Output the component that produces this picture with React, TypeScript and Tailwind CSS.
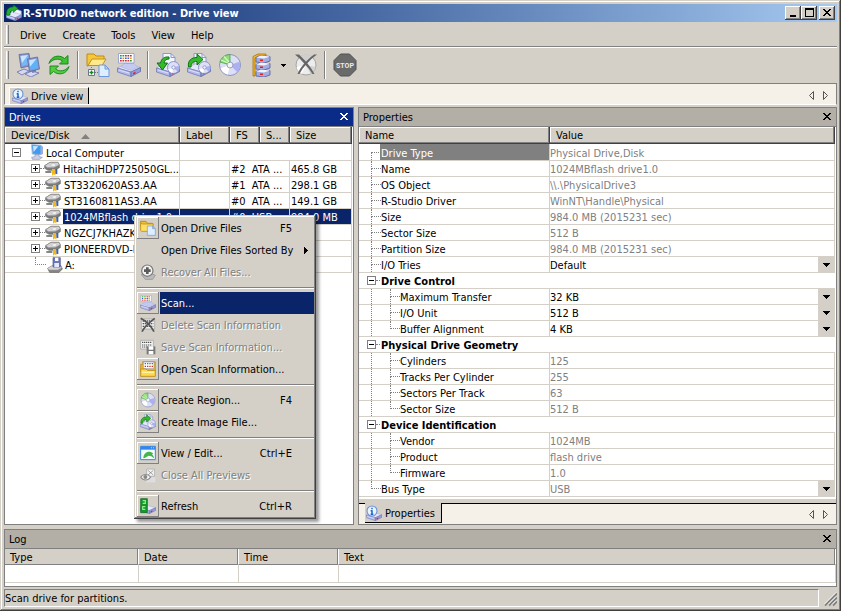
import { useState } from "react";
import type { ReactNode } from "react";
import clsx from "clsx";

/* ---------- icon parts, all drawn on a 24 x 24 grid ---------- */

const Svg = ({ size = 24, gray, children }: { size?: number; gray?: boolean; children: ReactNode }) => (
  <svg
    width={size}
    height={size}
    viewBox="0 0 24 24"
    aria-hidden="true"
    className={clsx("shrink-0", gray && "grayscale")}
  >
    {children}
  </svg>
);

const Box = () => (
  <g>
    <path d="M.5 15 9 10.500l14.500 4L14 19z" fill="#e6e8f8" stroke="#a3aad8" strokeWidth=".7" />
    <path d="M.5 15 14 19v4.500L.5 19z" fill="#b4bbec" stroke="#7079b4" strokeWidth=".8" />
    <path d="M14 19l9.500-4.500V18.500L14 23.500z" fill="#949cdc" stroke="#6069a6" strokeWidth=".8" />
    <path d="M2 17l10 3" stroke="#dfe3fb" strokeWidth=".9" />
    <path d="M16 20l2.500-1.200v1.600L16 21.600z" fill="#e02020" />
  </g>
);

const Disc = ({ cx, cy, r }: { cx: number; cy: number; r: number }) => (
  <g>
    <circle cx={cx} cy={cy} r={r} fill="#dcdff6" stroke="#858cc0" strokeWidth=".9" />
    <path d={`M${cx} ${cy}L${cx + r * 0.9} ${cy - r * 0.3}A${r} ${r} 0 0 1 ${cx + r * 0.7} ${cy + r * 0.7}z`} fill="#aab1ee" />
    <path d={`M${cx} ${cy}L${cx - r * 0.9} ${cy + r * 0.3}A${r} ${r} 0 0 0 ${cx - r * 0.2} ${cy + r * 0.9}z`} fill="#ffffff" />
    <circle cx={cx} cy={cy} r={r * 0.28} fill="#f4f4f4" stroke="#858cc0" strokeWidth=".8" />
  </g>
);

const Folder = () => (
  <g>
    <path d="M1 1h7l2 2h8v4H6L2 13H1z" fill="#f3c83c" stroke="#c08a12" strokeWidth="1" />
    <path d="M6 6h14l-4 6.500H2z" fill="#ffe98a" stroke="#c4921a" strokeWidth="1" />
  </g>
);

const Doc = ({ x, y, w, h }: { x: number; y: number; w: number; h: number }) => (
  <path
    d={`M${x} ${y}h${w - 4}l4 4v${h - 4}h${-w}z M${x + w - 4} ${y}v4h4`}
    fill="#dceeff"
    stroke="#6f97dc"
    strokeWidth="1"
  />
);

const Grid = () => (
  <g>
    <path d="M1.500 .5h15.500v9.500H1.500z" fill="#fff" stroke="#8d97c8" strokeWidth=".8" />
    {[3, 5.500, 8, 10.500, 13].map((x, i) => (
      <g key={x}>
        <rect x={x} y="2" width="1.700" height="1.500" fill={i < 2 ? "#1d9b3a" : "#b0342a"} />
        <rect x={x} y="4.500" width="1.700" height="1.500" fill={i % 3 === 1 ? "#e39a1f" : "#3b6ad0"} />
        <rect x={x} y="7" width="1.700" height="1.500" fill={i > 3 ? "#1d9b3a" : "#d12a2a"} />
      </g>
    ))}
  </g>
);

const Monitors = () => (
  <>
    <path d="M1 19l7-3 5 2-7 4z" fill="#d4d8f2" stroke="#737bb0" strokeWidth=".9" />
    <path d="M3 1.500 13 .5l2 12L5 15z" fill="#8c96cc" stroke="#5d689f" strokeWidth=".8" />
    <path d="M4.500 3l7.500-.9 1.600 9L6 13z" fill="#74b8f6" />
    <path d="M4.500 3l7.500-.9L6 10z" fill="#cbe6ff" />
    <path d="M9 21l7-3 7 2-8 4z" fill="#d4d8f2" stroke="#737bb0" strokeWidth=".9" />
    <path d="M16 16l4-1v4l-4 1z" fill="#7a84bf" />
    <path d="M11.500 6l10-2 2 12-10 2.500z" fill="#8c96cc" stroke="#5d689f" strokeWidth=".8" />
    <path d="M13 7.200l7.500-1.500 1.600 9.200-7.600 1.900z" fill="#5eb2f8" />
    <path d="M13 7.200l7.500-1.500-6.500 8z" fill="#c4e4ff" />
  </>
);

const Cycle = () => (
  <>
    <path d="M2 10.500C4 3 12 1 17.500 5.500L21 2.500V11h-8.500l3-3C11.500 5 6 5.500 2 10.500z" fill="#3ec22f" stroke="#128418" strokeWidth=".9" />
    <path d="M22 13.500c-2 7.500-10 9.500-15.500 5L3 21.500V13h8.500l-3 3c4 3 9.500 2.500 13.500-2.500z" fill="#56cd40" stroke="#128418" strokeWidth=".9" />
  </>
);

const OpenFiles = () => (
  <>
    <Folder />
    <path d="M5.500 14v2M9 19.500h3" stroke="#777" strokeDasharray="1 1" />
    <path d="M2.500 16.500h6v6h-6z" fill="#fff" stroke="#6c7486" />
    <path d="M5.500 17.500v4M3.500 19.500h4" stroke="#138a22" strokeWidth="1.400" />
    <Doc x={13} y={12} w={10} h={11.500} />
  </>
);

const FolderDoc = () => (
  <>
    <path d="M1 2h8l2 3h8v4H1z" fill="#f0bf30" stroke="#b98510" strokeWidth="1.300" />
    <path d="M1 16V5l3 1h16l-2 11H2z" fill="#ffdf63" stroke="#c4921a" strokeWidth="1.300" />
    <Doc x={11} y={9} w={12} h={14} />
  </>
);

const Scan = () => (
  <>
    <Box />
    <path d="M4 14l3-3.500h10l4 4-7 3z" fill="#c3c9ef" stroke="#a3aad8" strokeWidth=".5" />
    <Grid />
  </>
);

const ImageOf = ({ flip }: { flip?: boolean }) => (
  <>
    <path d="M7 .5h8l4 4V15H7z" fill="#f3f5ff" stroke="#8d97c8" />
    <path d="M15 .5v4h4" fill="none" stroke="#8d97c8" />
    <Box />
    <Disc cx={17.500} cy={14.500} r={6} />
    {flip ? (
      <path d="M1.500 14C.5 8 4 4.500 10 4.500V1l6 5.500-6 5.500V8.500C6 8.500 4 10 4 14z" fill="#35bb2a" stroke="#0c7414" strokeWidth="1" />
    ) : (
      <path d="M13 4C8.500 3.500 5.500 5.500 4.500 10H1l5.500 7 5-7H8c.5-2.500 2-4 5-4z" fill="#35bb2a" stroke="#0c7414" strokeWidth="1" />
    )}
  </>
);

const Region = () => (
  <>
    <Disc cx={12} cy={12} r={10.500} />
    <path d="M12 9V1.500A10.500 10.500 0 0 0 2 9l7 2c.5-1.200 1.500-2 3-2z" fill="#8fdc78" stroke="#48a53c" strokeWidth=".8" />
    <path d="M11 9 6 3.500M10 10 3 7" stroke="#d6f7c8" strokeWidth="1.200" />
  </>
);

const Cabinet = () => (
  <>
    <path d="M4 3.500 9 1h8v2H9L6 5v18H4z" fill="#f6bd2c" stroke="#a86e08" strokeWidth=".8" />
    {[2.500, 9.500, 16.500].map((y) => (
      <g key={y}>
        <path d={`M7 ${y + 2}l5-2 9 1v4.500l-6 2-8-1z`} fill="#a4addf" stroke="#5d67a4" strokeWidth=".9" />
        <path d={`M7 ${y + 2}l5-2 9 1-6 2z`} fill="#f0f2ff" />
        <path d={`M11 ${y + 4}h3v1.500h-3z`} fill="#dd2020" />
      </g>
    ))}
  </>
);

const DiscCross = () => (
  <>
    <circle cx="12" cy="12" r="10" fill="#ececec" stroke="#a4a4a4" />
    <path d="M12 12 6 3.500a10 10 0 0 1 12 0z" fill="#cfcfcf" />
    <path d="M12 12l9.500 2a10 10 0 0 1-5 7z" fill="#d2d2d2" />
    <path d="M12 12l-9.500 2a10 10 0 0 0 5 7z" fill="#fff" />
    <path d="M1 1.500h4C11 7 17 14 20.500 21h-2C14 14 8 7.500 1 1.500z" fill="#666" />
    <path d="M23 1.500h-3C13 7 7 13 3.500 21h2C9 14 15 7.500 23 1.500z" fill="#666" />
  </>
);

const Stop = () => (
  <>
    <path d="M7.500 1h9L23 7.500v9L16.500 23h-9L1 16.500v-9z" fill="#6a6a6a" stroke="#505050" />
    <text x="12" y="15" textAnchor="middle" fontSize="7" fontWeight="bold" fontFamily="Roboto, sans-serif" fill="#ececec">
      STOP
    </text>
  </>
);

const InfoDrive = () => (
  <>
    <Box />
    <circle cx="9" cy="9" r="7.500" fill="#e9f4ff" stroke="#6d8fd4" strokeWidth="1.600" />
    <path d="M9 4v2.400M9 8v6M7 8.500h2M7 14h4" stroke="#1766c8" strokeWidth="2.200" />
  </>
);

const AppMark = () => (
  <>
    <path d="M8 8l7-2 8 3v7l-7 3-8-3z" fill="#f2f4fc" stroke="#8590c5" />
    <Box />
    <path d="M1 15C0 7 4 3 11 3V0l7 5-7 6V8C7 8 6 10 6 15z" fill="#26ae32" stroke="#07701c" />
  </>
);

const Computer = () => (
  <>
    <path d="M4 1l14 1v14L5 15z" fill="#3d9bf2" stroke="#9db5da" strokeWidth="1.500" />
    <path d="M6 3l8 .5L7 12z" fill="#c7e5ff" />
    <path d="M18 2l3 2v11l-3 1z" fill="#a0abd8" />
    <path d="M9 16h6v3l5 1-4 3H5l-1-3 5-1z" fill="#cdd2e8" stroke="#8a90b5" />
  </>
);

const HardDisk = () => (
  <>
    <path d="M1 7l8-5h12l2 4v4l-7 4H6L1 11z" fill="#7d7d7d" stroke="#555" strokeWidth=".8" />
    <path d="M1 7l8-5h12l2 4-8 4H5z" fill="#d4d4d4" stroke="#777" strokeWidth=".8" />
    <ellipse cx="14" cy="6" rx="4" ry="2" fill="#f7f7f7" stroke="#999" strokeWidth=".6" />
    <path d="M2 15h9v3H2z" fill="#858585" />
    <path d="M12 12h5v10l-2-2-3 2z" fill="#f0b91f" />
    <path d="M17 12h3v8l-3-1z" fill="#3c5fb8" />
  </>
);

const Floppy = () => (
  <>
    <path d="M1 17l7-4h13l2 5-5 5H4z" fill="#8a8a8a" stroke="#555" />
    <path d="M1 17l7-4h13l1 3-6 3H3z" fill="#d4d4d4" />
    <path d="M9 1h11v14H9z" fill="#6b78b8" stroke="#4b558e" />
    <path d="M12 1h5v5h-5z" fill="#fff" />
    <path d="M11 9h7v6h-7z" fill="#e4e8fa" />
  </>
);

const Recover = () => (
  <>
    <path d="M2 16l9-4 12 5-4 6H8z" fill="#bbb" stroke="#888" />
    <circle cx="11" cy="10" r="8.500" fill="#f1f1f1" stroke="#777" strokeWidth="1.800" />
    <path d="M11 5v10M6 10h10" stroke="#5b5b5b" strokeWidth="4" />
  </>
);

const GridCross = () => (
  <>
    <path d="M2 3h20v15H2z" fill="#f0f0f0" stroke="#999" />
    <path d="M4 6h16M4 10h16M4 14h16" stroke="#555" strokeWidth="2" strokeDasharray="2 1" />
    <path d="M1 2c8 4 15 11 20 20M22 2C14 8 7 14 3 22" fill="none" stroke="#555" strokeWidth="2.600" />
  </>
);

const GridSave = () => (
  <>
    <path d="M1 2h19v13H1z" fill="#f5f5f5" stroke="#999" />
    <path d="M3 5h15M3 9h15M3 12h8" stroke="#555" strokeWidth="1.800" strokeDasharray="2 1" />
    <path d="M10 11h13v12H10z" fill="#777" />
    <path d="M13 11h7v5h-7zM13 18h7v5h-7z" fill="#fff" />
  </>
);

const GridFolder = () => (
  <>
    <path d="M1 5h3V1h19v14H1z" fill="#ecb62d" stroke="#b98510" />
    <path d="M5 1.500h16v10H5z" fill="#fff" stroke="#8d97c8" />
    <path d="M7 4h13" stroke="#1d9b3a" strokeWidth="2" strokeDasharray="2 1.500" />
    <path d="M7 8h13" stroke="#d12a2a" strokeWidth="2" strokeDasharray="2 1.500" />
    <path d="M1 12h8l2 2h12v9H1z" fill="#ffd94a" stroke="#bb8a10" strokeWidth="1.300" />
    <path d="M3 17h18" stroke="#fff3a8" strokeWidth="2" />
  </>
);

const Preview = () => (
  <>
    <path d="M1 2h22v20H1z" fill="#f4fbff" stroke="#3b86dc" strokeWidth="1.500" />
    <path d="M1 2h22v5H1z" fill="#2f86ec" />
    <path d="M17 4h1M20 4h1" stroke="#fff" strokeWidth="1.600" />
    <path d="M5 20c0-9 9-13 15-7l-2 1c2 2 3 4 3 6-3-3-5-4-8-4-3 1-5 4-8 4z" fill="#45b648" />
  </>
);

const ClosePreview = () => (
  <>
    <path d="M9 2h14v21H9z" fill="#dedede" />
    <path d="M10 3h12v11H10z" fill="#f3f3f3" stroke="#999" />
    <path d="M12 5l8 7M20 5l-8 7" stroke="#777" />
    <path d="M1 15c4-5 11-5 15 0-4 6-11 6-15 0z" fill="#f5f5f5" stroke="#888" strokeWidth="1.600" />
    <circle cx="8" cy="15" r="3" fill="#888" />
  </>
);

const RefreshDrive = () => (
  <>
    <Box />
    <path d="M1 1h10v21H1z" fill="#16962b" stroke="#08621a" />
    <path d="M4 4h4v4H4M8 13H4v4h4" fill="none" stroke="#8df08b" strokeWidth="1.800" />
  </>
);

/* ---------- shared bits ---------- */

const raised = "bg-[#d4d0c8] shadow-[inset_-1px_-1px_#808080,inset_1px_1px_#fff]";
const label = "pt-[2px]";

const CloseGlyph = ({ white }: { white?: boolean }) => (
  <svg width="8" height="8" viewBox="0 0 8 8" aria-hidden="true" shapeRendering="crispEdges">
    <path
      d="M0 0h2v1h1v1h2V1h1V0h2v1H7v1H6v1H5v1h1v1h1v1h1v1H6V6H5V5H3v1H2v1H0V6h1V5h1V4h1V3H2V2H1V1H0z"
      fill={white ? "#fff" : "#000"}
    />
  </svg>
);

const Arrows = () => (
  <div className="ml-auto flex items-center gap-[9px] pr-[7px]">
    <button type="button" aria-label="Previous tab">
      <svg width="6" height="9" viewBox="0 0 6 9">
        <path d="M5.500 .5v8l-4-4z" fill="none" stroke="#555" />
      </svg>
    </button>
    <button type="button" aria-label="Next tab">
      <svg width="6" height="9" viewBox="0 0 6 9">
        <path d="M.5 .5v8l4-4z" fill="none" stroke="#555" />
      </svg>
    </button>
  </div>
);

const PanelTitle = ({ title, active }: { title: string; active?: boolean }) => (
  <div
    className={clsx(
      "flex h-[19px] items-center justify-between border-b border-[#808080] pr-[5px] pl-1",
      active ? "bg-[#0a2c88] text-white" : "bg-[#b3afa7]",
    )}
  >
    <h2 className={label}>{title}</h2>
    <button type="button" aria-label={`Close ${title}`}>
      <CloseGlyph white={active} />
    </button>
  </div>
);

const Expander = ({ open }: { open?: boolean }) => (
  <button
    type="button"
    aria-label={open ? "Collapse" : "Expand"}
    className="flex size-[9px] shrink-0 items-center justify-center border border-[#808080] bg-white"
  >
    <svg width="5" height="5" viewBox="0 0 5 5" shapeRendering="crispEdges">
      <path d={open ? "M0 2h5v1H0z" : "M0 2h2V0h1v2h2v1H3v2H2V3H0z"} />
    </svg>
  </button>
);

const DownGlyph = () => (
  <svg width="7" height="4" viewBox="0 0 7 4" aria-hidden="true" shapeRendering="crispEdges">
    <path d="M0 0h7v1H6v1H5v1H4v1H3V3H2V2H1V1H0z" />
  </svg>
);

/* ---------- data ---------- */

const MENUS = ["Drive", "Create", "Tools", "View", "Help"];

const DRIVES = [
  { name: "HitachiHDP725050GL...", fs: "#2  ATA ...", size: "465.8 GB" },
  { name: "ST3320620AS3.AA", fs: "#1  ATA ...", size: "298.1 GB" },
  { name: "ST3160811AS3.AA", fs: "#0  ATA ...", size: "149.1 GB" },
  { name: "1024MBflash drive1.0", fs: "#0  USB ...", size: "984.0 MB" },
  { name: "NGZCJ7KHAZKW", fs: "", size: "" },
  { name: "PIONEERDVD-RW", fs: "", size: "" },
];

type Prop = { name: string; value?: string; group?: boolean; sub?: boolean; last?: boolean; edit?: boolean; dim?: boolean };

const PROPS: Prop[] = [
  { name: "Drive Type", value: "Physical Drive,Disk" },
  { name: "Name", value: "1024MBflash drive1.0" },
  { name: "OS Object", value: "\\\\.\\PhysicalDrive3" },
  { name: "R-Studio Driver", value: "WinNT\\Handle\\Physical" },
  { name: "Size", value: "984.0 MB (2015231 sec)" },
  { name: "Sector Size", value: "512 B" },
  { name: "Partition Size", value: "984.0 MB (2015231 sec)" },
  { name: "I/O Tries", value: "Default", edit: true },
  { name: "Drive Control", group: true },
  { name: "Maximum Transfer", value: "32 KB", sub: true, edit: true },
  { name: "I/O Unit", value: "512 B", sub: true, edit: true },
  { name: "Buffer Alignment", value: "4 KB", sub: true, last: true, edit: true },
  { name: "Physical Drive Geometry", group: true },
  { name: "Cylinders", value: "125", sub: true },
  { name: "Tracks Per Cylinder", value: "255", sub: true },
  { name: "Sectors Per Track", value: "63", sub: true },
  { name: "Sector Size", value: "512 B", sub: true, last: true },
  { name: "Device Identification", group: true },
  { name: "Vendor", value: "1024MB", sub: true },
  { name: "Product", value: "flash drive", sub: true },
  { name: "Firmware", value: "1.0", sub: true, last: true },
  { name: "Bus Type", value: "USB", last: true, edit: true, dim: true },
];

type Item = { label: string; keys?: string; icon?: ReactNode; off?: boolean; more?: boolean };

const CONTEXT: Item[][] = [
  [
    { label: "Open Drive Files", keys: "F5", icon: <FolderDoc /> },
    { label: "Open Drive Files Sorted By", more: true },
    { label: "Recover All Files...", icon: <Recover />, off: true },
  ],
  [
    { label: "Scan...", icon: <Scan /> },
    { label: "Delete Scan Information", icon: <GridCross />, off: true },
    { label: "Save Scan Information...", icon: <GridSave />, off: true },
    { label: "Open Scan Information...", icon: <GridFolder /> },
  ],
  [
    { label: "Create Region...", keys: "F4", icon: <Region /> },
    { label: "Create Image File...", icon: <ImageOf flip /> },
  ],
  [
    { label: "View / Edit...", keys: "Ctrl+E", icon: <Preview /> },
    { label: "Close All Previews", icon: <ClosePreview />, off: true },
  ],
  [{ label: "Refresh", keys: "Ctrl+R", icon: <RefreshDrive /> }],
];

/* ---------- sections ---------- */

const TitleBar = () => (
  <header className="flex h-[18px] items-center bg-linear-to-r from-[#0a246a] to-[#a6caf0] pr-[2px] pl-[2px]">
    <Svg size={16}>
      <AppMark />
    </Svg>
    <h1 className="ml-px flex-1 pt-px font-bold whitespace-nowrap text-white">R-STUDIO network edition - Drive view</h1>
    <div className="flex">
      {["Minimize", "Maximize", "Close"].map((name) => (
        <button
          key={name}
          type="button"
          aria-label={name}
          className={clsx(
            "flex h-[14px] w-4 justify-center bg-[#d4d0c8] pt-[2px] shadow-[inset_-1px_-1px_#404040,inset_1px_1px_#fff,inset_-2px_-2px_#808080]",
            name === "Close" && "ml-[2px] pt-[3px]",
          )}
        >
          {name === "Close" ? (
            <CloseGlyph />
          ) : (
            <svg width="9" height="9" viewBox="0 0 9 9" shapeRendering="crispEdges">
              <path d={name === "Minimize" ? "M1 7h6v2H1z" : "M0 0h9v9H0zM1 2v6h7V2z"} fillRule="evenodd" />
            </svg>
          )}
        </button>
      ))}
    </div>
  </header>
);

const Grip = () => <span className="w-[3px] self-stretch border-r border-l border-r-[#808080] border-l-white" />;

const Tool = ({ name, children }: { name: string; children: ReactNode }) => (
  <button type="button" aria-label={name} title={name} className="flex h-7 w-[31px] items-center justify-center">
    <Svg>{children}</Svg>
  </button>
);

const ToolSep = () => (
  <span className="flex h-7 w-2 justify-center">
    <span className="w-[2px] border-r border-l border-r-white border-l-[#808080]" />
  </span>
);

const Toolbar = () => (
  <div className="flex h-[35px] items-center pt-[3px] pb-1 pl-[2px]">
    <Grip />
    <div className="flex items-center pl-[3px]">
      <Tool name="Connect"><Monitors /></Tool>
      <Tool name="Refresh"><Cycle /></Tool>
      <ToolSep />
      <Tool name="Open drive files"><OpenFiles /></Tool>
      <Tool name="Scan"><Scan /></Tool>
      <ToolSep />
      <Tool name="Open image"><ImageOf /></Tool>
      <Tool name="Create image"><ImageOf flip /></Tool>
      <Tool name="Create region"><Region /></Tool>
      <Tool name="Create RAID"><Cabinet /></Tool>
      <button type="button" aria-label="More RAID types" className="flex h-7 w-[14px] items-center justify-center">
        <svg width="5" height="3" viewBox="0 0 5 3" shapeRendering="crispEdges">
          <path d="M0 0h5v1H4v1H3v1H2V2H1V1H0z" />
        </svg>
      </button>
      <Tool name="Delete"><DiscCross /></Tool>
      <ToolSep />
      <Tool name="Stop"><Stop /></Tool>
    </div>
  </div>
);

const th =
  "h-[17px] border-r border-b border-[#404040] bg-[#d4d0c8] p-0 pt-[2px] pl-[6px] text-left leading-[14px] font-normal whitespace-nowrap shadow-[inset_-1px_-1px_#808080,inset_1px_1px_#fff]";
const td = "h-4 border-b border-[#d4d0c8] p-0 leading-[13px] whitespace-nowrap";
const cell = "block h-[15px] pt-[2px]";

const DrivesPanel = () => {
  const [selected, setSelected] = useState(3);

  return (
    <section className="flex min-w-0 flex-col border border-[#808080] bg-white">
      <PanelTitle title="Drives" active />
      <div className="pr-px">
        <table className="w-full table-fixed border-separate border-spacing-0">
          <colgroup>
            <col />
            <col className="w-[50px]" />
            <col className="w-[30px]" />
            <col className="w-[30px]" />
            <col className="w-[62px]" />
          </colgroup>
          <thead>
            <tr>
              <th className={th}>
                <span className="flex items-center gap-3">
                  Device/Disk
                  <svg width="9" height="5" viewBox="0 0 9 5" aria-hidden="true">
                    <path d="M4.500 0 9 5H0z" fill="#808080" />
                  </svg>
                </span>
              </th>
              <th className={th}>Label</th>
              <th className={th}>FS</th>
              <th className={th}>S...</th>
              <th className={th}>Size</th>
            </tr>
          </thead>
          <tbody>
            <tr>
              <td className={clsx(td, "border-r")}>
                <div className="flex h-4 items-center pl-[7px]">
                  <Expander open />
                  <span className="ml-2 flex">
                    <Svg size={16}><Computer /></Svg>
                  </span>
                  <span className={clsx(label, "pl-px")}>Local Computer</span>
                </div>
              </td>
              <td className={clsx(td, "border-r")} colSpan={4} />
            </tr>
            {DRIVES.map((drive, i) => {
              const on = i === selected;
              return (
                <tr key={drive.name} onClick={() => setSelected(i)}>
                  <td className={clsx(td, "border-r")}>
                    <div className="flex h-[15px] items-center pl-[26px]">
                      <Expander />
                      <span className="w-[5px] border-t border-dotted border-[#808080]" />
                      <Svg size={16}><HardDisk /></Svg>
                      <span className={clsx(cell, "ml-[2px] flex-1 pl-px", on && "bg-[#0a246a] text-white")}>
                        {drive.name}
                      </span>
                    </div>
                  </td>
                  <td className={clsx(td, "border-r", on && "bg-[#0a246a]")} />
                  <td colSpan={2} className={clsx(td, "border-r", on && "bg-[#0a246a] text-white")}>
                    <span className={clsx(cell, "pl-px whitespace-pre")}>{drive.fs}</span>
                  </td>
                  <td className={clsx(td, "border-r", on && "bg-[#0a246a] text-white")}>
                    <span className={clsx(cell, "pl-px")}>{drive.size}</span>
                  </td>
                </tr>
              );
            })}
            <tr>
              <td className={clsx(td, "border-r")}>
                <div className="flex h-[15px] items-center pl-[30px]">
                  <span className="mr-px h-2 w-[11px] self-start border-b border-l border-dotted border-[#808080]" />
                  <Svg size={16}><Floppy /></Svg>
                  <span className={clsx(cell, "ml-px pl-px")}>A:</span>
                </div>
              </td>
              <td className={clsx(td, "border-r")} />
              <td className={clsx(td, "border-r")} colSpan={2} />
              <td className={clsx(td, "border-r")} />
            </tr>
          </tbody>
        </table>
      </div>
    </section>
  );
};

// dotted guide: a vertical run with a short branch to the text
const Branch = ({ end, first }: { end?: boolean; first?: boolean }) => (
  <span className={clsx("flex w-[10px] shrink-0 flex-col self-stretch", first && "justify-end")}>
    <span className={clsx("h-2 border-dotted border-[#808080]", first ? "border-t border-l" : "border-b border-l")} />
    {!end && !first && <span className="flex-1 border-l border-dotted border-[#808080]" />}
  </span>
);

const PropName = ({ row, index }: { row: Prop; index: number }) => {
  if (row.group) {
    return (
      <div className="flex h-[15px] items-center pl-2">
        <Expander open />
        <span className="w-1 border-t border-dotted border-[#808080]" />
        <span className={clsx(label, "pl-px font-bold")}>{row.name}</span>
      </div>
    );
  }
  const first = index === 0;
  return (
    <div className={clsx("flex items-center pl-3", first ? "h-4" : "h-[15px]")}>
      {row.sub ? (
        <>
          <span className="w-[19px] self-stretch border-l border-dotted border-[#808080]" />
          <Branch end={row.last} />
        </>
      ) : (
        <Branch first={first} end={row.last} />
      )}
      <span className={clsx("flex-1", first ? "-ml-px h-4 bg-[#808080] pt-[3px] pl-px text-white" : label)}>
        {row.name}
      </span>
    </div>
  );
};

const PropertiesPanel = () => (
  <section className="flex min-w-0 flex-col border border-[#808080] bg-white">
    <PanelTitle title="Properties" />
    <div className="flex-1 pr-px pb-[2px]">
      <table className="w-full table-fixed border-separate border-spacing-0">
        <colgroup>
          <col className="w-[191px]" />
          <col />
        </colgroup>
        <thead>
          <tr>
            <th className={th}>Name</th>
            <th className={th}>Value</th>
          </tr>
        </thead>
        <tbody>
          {PROPS.map((row, i) => (
            <tr key={i}>
              <td className={clsx(td, !row.group && "border-r")} colSpan={row.group ? 2 : 1}>
                <PropName row={row} index={i} />
              </td>
              {!row.group && (
                <td className={clsx(td, "border-r", row.edit && !row.dim ? "text-black" : "text-[#808080]")}>
                  {row.edit ? (
                    <div className="flex h-[15px]">
                      <select
                        aria-label={row.name}
                        className="h-[15px] min-w-0 flex-1 appearance-none bg-white p-0 pt-[2px] leading-[13px]"
                      >
                        <option>{row.value}</option>
                      </select>
                      <span className="pointer-events-none flex w-4 items-center justify-center bg-[#d4d0c8]">
                        <DownGlyph />
                      </span>
                    </div>
                  ) : (
                    <span className={cell}>{row.value}</span>
                  )}
                </td>
              )}
            </tr>
          ))}
        </tbody>
      </table>
    </div>
    <div className="border-t-4 border-[#d4d0c8]">
      <div className="flex h-[21px] border-t border-black bg-[#f5f1e9]">
        <button
          type="button"
          className="-mt-px ml-[6px] flex h-5 items-center gap-[3px] border-r border-b border-black bg-[#d4d0c8] pr-[6px] pl-px"
        >
          <Svg size={16}><InfoDrive /></Svg>
          <span className={label}>Properties</span>
        </button>
        <Arrows />
      </div>
    </div>
  </section>
);

const LogPanel = () => (
  <section className="mt-1 border border-[#808080] bg-white pb-[3px]">
    <PanelTitle title="Log" />
    <table className="w-full table-fixed border-separate border-spacing-0">
      <colgroup>
        <col className="w-[134px]" />
        <col className="w-[100px]" />
        <col className="w-[100px]" />
        <col />
      </colgroup>
      <thead>
        <tr>
          {["Type", "Date", "Time", "Text"].map((name) => (
            <th
              key={name}
              className="h-4 border-r border-b border-r-white border-b-[#808080] bg-[#d4d0c8] p-0 pt-[2px] pl-[5px] text-left leading-[13px] font-normal shadow-[inset_-1px_0_#808080]"
            >
              {name}
            </th>
          ))}
        </tr>
      </thead>
      <tbody>
        <tr>
          {[0, 1, 2, 3].map((n) => (
            <td key={n} className="h-[18px] border-r border-b border-[#d4d0c8] p-0" />
          ))}
        </tr>
      </tbody>
    </table>
  </section>
);

const ContextMenu = () => {
  const [hot, setHot] = useState("Scan...");

  return (
    <div
      role="menu"
      className="absolute top-[215px] left-[134px] w-[182px] bg-[#d4d0c8] p-[2px] pl-[3px] shadow-[inset_-1px_-1px_#404040,inset_1px_1px_#d4d0c8,inset_-2px_-2px_#808080,inset_2px_2px_#fff,3px_3px_3px_#00000066]"
    >
      {CONTEXT.map((group, g) => (
        <div key={g}>
          {g > 0 && (
            <div className="flex h-[9px] items-center">
              <div className="h-[2px] flex-1 border-t border-b border-t-[#808080] border-b-white" />
            </div>
          )}
          {group.map((item) => (
            <button
              key={item.label}
              type="button"
              role="menuitem"
              disabled={item.off}
              onMouseEnter={() => setHot(item.label)}
              className="flex h-[22px] w-full items-center gap-px text-left"
            >
              <span className={clsx("flex size-[22px] shrink-0 items-center justify-center", item.icon && !item.off && raised)}>
                {item.icon && <Svg size={16} gray={item.off}>{item.icon}</Svg>}
              </span>
              <span
                className={clsx("flex h-full flex-1 items-center justify-between pl-px whitespace-nowrap", {
                  "text-[#808080] [text-shadow:1px_1px_#fff]": item.off,
                  "bg-[#0a246a] text-white": hot === item.label,
                  "pr-[6px]": item.more,
                  "pr-[22px]": !item.more,
                })}
              >
                <span className={label}>{item.label}</span>
                {item.keys && <span className={label}>{item.keys}</span>}
                {item.more && (
                  <svg width="4" height="7" viewBox="0 0 4 7" shapeRendering="crispEdges">
                    <path d="M0 0h1v1h1v1h1v1h1v1H3v1H2v1H1v1H0z" />
                  </svg>
                )}
              </span>
            </button>
          ))}
        </div>
      ))}
    </div>
  );
};

const StatusBar = () => (
  <footer className="mt-[2px] flex h-[18px]">
    <p className="mr-[5px] flex-1 border border-t-[#808080] border-r-white border-b-white border-l-[#808080] pt-[2px] leading-[14px]">
      Scan drive for partitions.
    </p>
    <svg width="13" height="18" viewBox="0 0 13 18" aria-hidden="true">
      <path d="M1 16.500l12-12M5 16.500l8-8M9 16.500l4-4" stroke="#808080" strokeWidth="1.800" />
      <path d="M0 15.500l12-12M4 15.500l8-8M8 15.500l4-4" stroke="#fff" strokeWidth=".8" />
    </svg>
  </footer>
);

const App = () => (
  <div className="relative flex min-h-screen w-full flex-col bg-[#d4d0c8] p-1 font-['DejaVu_Sans_Condensed','DejaVu_Sans',sans-serif] text-[11px] leading-4 text-black shadow-[inset_-1px_-1px_#404040,inset_1px_1px_#d4d0c8,inset_-2px_-2px_#808080,inset_2px_2px_#fff]">
    <TitleBar />
    <nav className="flex h-[26px] border-b border-white pl-[2px] shadow-[inset_0_-1px_#808080]">
      <div className="flex py-[3px]">
        <Grip />
      </div>
      <div className="flex items-center pt-[2px] pl-[3px]">
        {MENUS.map((name) => (
          <button key={name} type="button" className="px-2">
            {name}
          </button>
        ))}
      </div>
    </nav>
    <Toolbar />
    <div className="mb-[2px] flex h-[22px] border border-[#808080] border-b-white bg-[#f5f1e9] pt-[3px] pl-1">
      <button
        type="button"
        className="flex items-center gap-[3px] border-t border-r border-l border-t-white border-r-black border-l-white bg-[#d4d0c8] pr-[5px] pl-[2px]"
      >
        <Svg size={16}><InfoDrive /></Svg>
        <span className={label}>Drive view</span>
      </button>
      <Arrows />
    </div>
    <main className="grid flex-1 grid-cols-[350fr_479fr] gap-1">
      <DrivesPanel />
      <PropertiesPanel />
    </main>
    <LogPanel />
    <StatusBar />
    <ContextMenu />
  </div>
);

export default App;
